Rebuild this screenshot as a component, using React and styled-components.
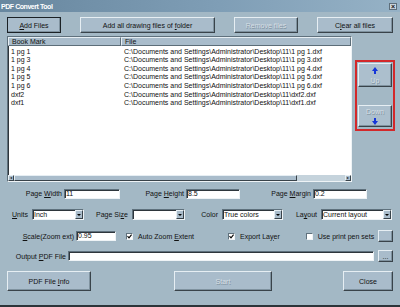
import React from "react";
import styled, { createGlobalStyle, css } from "styled-components";

const Global = createGlobalStyle`
  html, body { margin: 0; padding: 0; background: #a3b8c5; }
  body { font-family: "Liberation Sans", Arial, sans-serif; font-size: 7px; color: #111; }
`;

const raised = css`
  border-top: 1px solid #e6eef3;
  border-left: 1px solid #e6eef3;
  border-right: 1px solid #39434a;
  border-bottom: 1px solid #39434a;
  box-shadow: inset -1px -1px 0 #7f929f;
`;

const sunken = css`
  border-top: 1px solid #5f717d;
  border-left: 1px solid #5f717d;
  border-right: 1px solid #eef3f6;
  border-bottom: 1px solid #eef3f6;
  box-shadow: inset 1px 1px 0 #2e363c;
`;

const Window = styled.div`
  width: 400px;
  height: 307px;
  box-sizing: border-box;
  background: #a3b8c5;
  border-bottom: 2px solid #2c3439;
  display: flex;
  flex-direction: column;
  overflow: hidden;
`;

const TitleBar = styled.div`
  height: 12px;
  flex: none;
  display: flex;
  align-items: center;
  justify-content: space-between;
  padding: 0 3px 0 1px;
  background: linear-gradient(90deg, #68879f 0%, #7f9eb6 55%, #96b2c6 100%);
`;

const Title = styled.span`
  color: #fff;
  font-weight: bold;
  font-size: 7px;
  letter-spacing: -0.45px;
`;

const CloseBox = styled.div`
  width: 8px;
  height: 7px;
  box-sizing: border-box;
  background: #c9d5dd;
  border: 1px solid #5d6e7a;
  font-size: 7px;
  line-height: 5px;
  text-align: center;
  font-weight: bold;
`;

const Body = styled.div`
  flex: 1;
  display: flex;
  flex-direction: column;
  padding: 0 7px;
`;

const Toolbar = styled.div`
  margin-top: 5px;
  height: 16px;
  display: flex;
  justify-content: space-between;
`;

const Button = styled.div`
  box-sizing: border-box;
  width: ${(p) => p.$w}px;
  height: ${(p) => p.$h || 16}px;
  ${raised};
  background: #a9bccb;
  display: flex;
  align-items: center;
  justify-content: center;
  font-size: 7px;
  color: ${(p) => (p.$disabled ? "#d6dfe5" : "#111")};
  text-shadow: ${(p) => (p.$disabled ? "0.6px 0.6px 0 #7f929f" : "none")};
  outline: ${(p) => (p.$default ? "1px solid #1b2125" : "none")};
  outline-offset: -1px;
  u { text-decoration: underline; }
`;

const Main = styled.div`
  margin-top: 3px;
  height: 146px;
  display: flex;
`;

const List = styled.div`
  flex: 1;
  box-sizing: border-box;
  background: #fff;
  ${sunken};
  display: flex;
  flex-direction: column;
`;

const Header = styled.div`
  height: 9px;
  flex: none;
  display: grid;
  grid-template-columns: 113px 1fr;
`;

const HeaderCell = styled.div`
  box-sizing: border-box;
  ${raised};
  box-shadow: none;
  border-right-color: #5c6d78;
  border-bottom-color: #5c6d78;
  background: #a9bccb;
  padding-left: 3px;
  line-height: 7px;
  font-size: 7px;
`;

const Rows = styled.div`
  flex: 1;
  padding-top: 1.5px;
`;

const Row = styled.div`
  height: 8.65px;
  line-height: 8.65px;
  display: grid;
  grid-template-columns: 113px 1fr;
  white-space: nowrap;
  span { padding-left: 3px; }
`;

const HScroll = styled.div`
  height: 6px;
  flex: none;
  display: flex;
  background: #c5d3dc;
`;

const ScrollArrow = styled.div`
  width: 6px;
  box-sizing: border-box;
  ${raised};
  box-shadow: none;
  background: #a9bccb;
  font-size: 4px;
  line-height: 4px;
  text-align: center;
`;

const Thumb = styled.div`
  width: ${(p) => p.$w}px;
  box-sizing: border-box;
  ${raised};
  box-shadow: none;
  background: #a9bccb;
`;

const Side = styled.div`
  width: 43px;
  margin-right: -2px;
  padding: 24px 0 0 3px;
  box-sizing: border-box;
`;

const RedFrame = styled.div`
  width: 40px;
  height: 71px;
  box-sizing: border-box;
  border: 2px solid #d3282a;
  padding: 1px 1px 2px 1px;
  display: flex;
  flex-direction: column;
  justify-content: space-between;
`;

const MoveButton = styled(Button)`
  width: 34px;
  height: ${(p) => p.$h}px;
  flex-direction: column;
  gap: 3px;
  background: #acbfcd;
`;

const Arrow = ({ down }) => (
  <svg width="6" height="7" viewBox="0 0 6 7">
    <path
      d={down ? "M2 0h2v3h2L3 7 0 3h2z" : "M3 0l3 4H4v3H2V4H0z"}
      fill="#1535d8"
    />
  </svg>
);

const FormRow = styled.div`
  display: flex;
  align-items: center;
  height: ${(p) => p.$h}px;
  margin-top: ${(p) => p.$mt}px;
`;

const Label = styled.div`
  width: ${(p) => p.$w}px;
  box-sizing: border-box;
  text-align: right;
  padding-right: ${(p) => (p.$pr !== undefined ? p.$pr : 2)}px;
  white-space: nowrap;
  font-size: 7px;
`;

const Input = styled.div`
  box-sizing: border-box;
  width: ${(p) => (p.$w ? `${p.$w}px` : "auto")};
  flex: ${(p) => (p.$w ? "none" : 1)};
  height: ${(p) => p.$h || 10}px;
  background: #fff;
  ${sunken};
  padding-left: 1px;
  font-size: 7px;
  line-height: 8px;
  white-space: nowrap;
`;

const Select = styled(Input)`
  height: 11px;
  display: flex;
  justify-content: space-between;
  line-height: 9px;
`;

const DropBtn = styled.div`
  width: 8px;
  box-sizing: border-box;
  ${raised};
  box-shadow: none;
  background: #a9bccb;
  display: flex;
  align-items: center;
  justify-content: center;
  &::after {
    content: "";
    border-left: 2px solid transparent;
    border-right: 2px solid transparent;
    border-top: 2px solid #000;
  }
`;

const Check = styled.div`
  display: flex;
  align-items: center;
  margin-left: ${(p) => p.$ml}px;
  gap: 5px;
  white-space: nowrap;
`;

const Box = styled.div`
  width: 7px;
  height: 7px;
  box-sizing: border-box;
  background: #fff;
  ${sunken};
  box-shadow: none;
  display: flex;
  align-items: center;
  justify-content: center;
`;

const Footer = styled.div`
  margin-top: 9px;
  display: flex;
`;

const SelectField = ({ label, lw, sw, value }) => (
  <>
    <Label $w={lw} $pr={4}>{label}</Label>
    <Select $w={sw}>
      <span>{value}</span>
      <DropBtn />
    </Select>
  </>
);

const CheckItem = ({ ml, checked, children }) => (
  <Check $ml={ml}>
    <Box>
      {checked && (
        <svg width="5" height="5" viewBox="0 0 5 5">
          <path d="M0.5 2.2l1.5 1.6 2.6-3.2" stroke="#000" strokeWidth="1.1" fill="none" />
        </svg>
      )}
    </Box>
    <span>{children}</span>
  </Check>
);

const files = [
  ["1 pg 1", "1 pg 1.dxf"],
  ["1 pg 3", "1 pg 3.dxf"],
  ["1 pg 4", "1 pg 4.dxf"],
  ["1 pg 5", "1 pg 5.dxf"],
  ["1 pg 6", "1 pg 6.dxf"],
  ["dxf2", "dxf2.dxf"],
  ["dxf1", "dxf1.dxf"],
];

export default function App() {
  return (
    <>
      <Global />
      <Window>
        <TitleBar>
          <Title>PDF Convert Tool</Title>
          <CloseBox>×</CloseBox>
        </TitleBar>
        <Body>
          <Toolbar>
            <Button $w={54} $default>
              <span><u>A</u>dd Files</span>
            </Button>
            <Button $w={135}>
              <span>Add all drawing files of <u>f</u>older</span>
            </Button>
            <Button $w={64} $disabled>
              Remove files
            </Button>
            <Button $w={76}>
              <span>C<u>l</u>ear all files</span>
            </Button>
          </Toolbar>

          <Main>
            <List>
              <Header>
                <HeaderCell>Book Mark</HeaderCell>
                <HeaderCell>File</HeaderCell>
              </Header>
              <Rows>
                {files.map(([name, file]) => (
                  <Row key={name}>
                    <span>{name}</span>
                    <span>C:\Documents and Settings\Administrator\Desktop\11\{file}</span>
                  </Row>
                ))}
              </Rows>
              <HScroll>
                <ScrollArrow>◂</ScrollArrow>
                <Thumb $w={283} />
                <div style={{ flex: 1 }} />
                <ScrollArrow>▸</ScrollArrow>
              </HScroll>
            </List>
            <Side>
              <RedFrame>
                <MoveButton $h={24} $disabled>
                  <Arrow />
                  <span>Up</span>
                </MoveButton>
                <MoveButton $h={22} $disabled>
                  <span>Down</span>
                  <Arrow down />
                </MoveButton>
              </RedFrame>
            </Side>
          </Main>

          <FormRow $h={11} $mt={6}>
            <Label $w={57}>Page <u>W</u>idth</Label>
            <Input $w={56}>11</Input>
            <Label $w={66}>Page <u>H</u>eight</Label>
            <Input $w={54}>8.5</Input>
            <Label $w={73}>Page <u>M</u>argin</Label>
            <Input $w={54}>0.2</Input>
          </FormRow>

          <FormRow $h={11} $mt={10}>
            <SelectField label={<><u>U</u>nits</>} lw={25} sw={52} value="Inch" />
            <SelectField label={<>Page Si<u>z</u>e</>} lw={48} sw={53} value="" />
            <SelectField label="Color" lw={37} sw={61} value="True colors" />
            <SelectField label={<>La<u>y</u>out</>} lw={38} sw={71} value="Current layout" />
          </FormRow>

          <FormRow $h={12} $mt={10}>
            <Label $w={69}><u>S</u>cale(Zoom ext)</Label>
            <Input $w={40}>0.95</Input>
            <CheckItem ml={10} checked>
              Auto Zoom <u>E</u>xtent
            </CheckItem>
            <CheckItem ml={34} checked>
              Export La<u>y</u>er
            </CheckItem>
            <CheckItem ml={26}>Use print pen sets</CheckItem>
            <div style={{ flex: 1 }} />
            <Button $w={15} $h={12} />
          </FormRow>

          <FormRow $h={12} $mt={8}>
            <Label $w={61}>Output <u>P</u>DF File</Label>
            <Input $h={10}></Input>
            <Button $w={15} $h={12} style={{ marginLeft: 4 }}>
              ...
            </Button>
          </FormRow>

          <Footer>
            <Button $w={84} $h={20}>
              <span>PDF File <u>I</u>nfo</span>
            </Button>
            <Button $w={98} $h={20} $disabled style={{ marginLeft: 83 }}>
              Start
            </Button>
            <div style={{ flex: 1 }} />
            <Button $w={50} $h={20}>
              Close
            </Button>
          </Footer>
        </Body>
      </Window>
    </>
  );
}
